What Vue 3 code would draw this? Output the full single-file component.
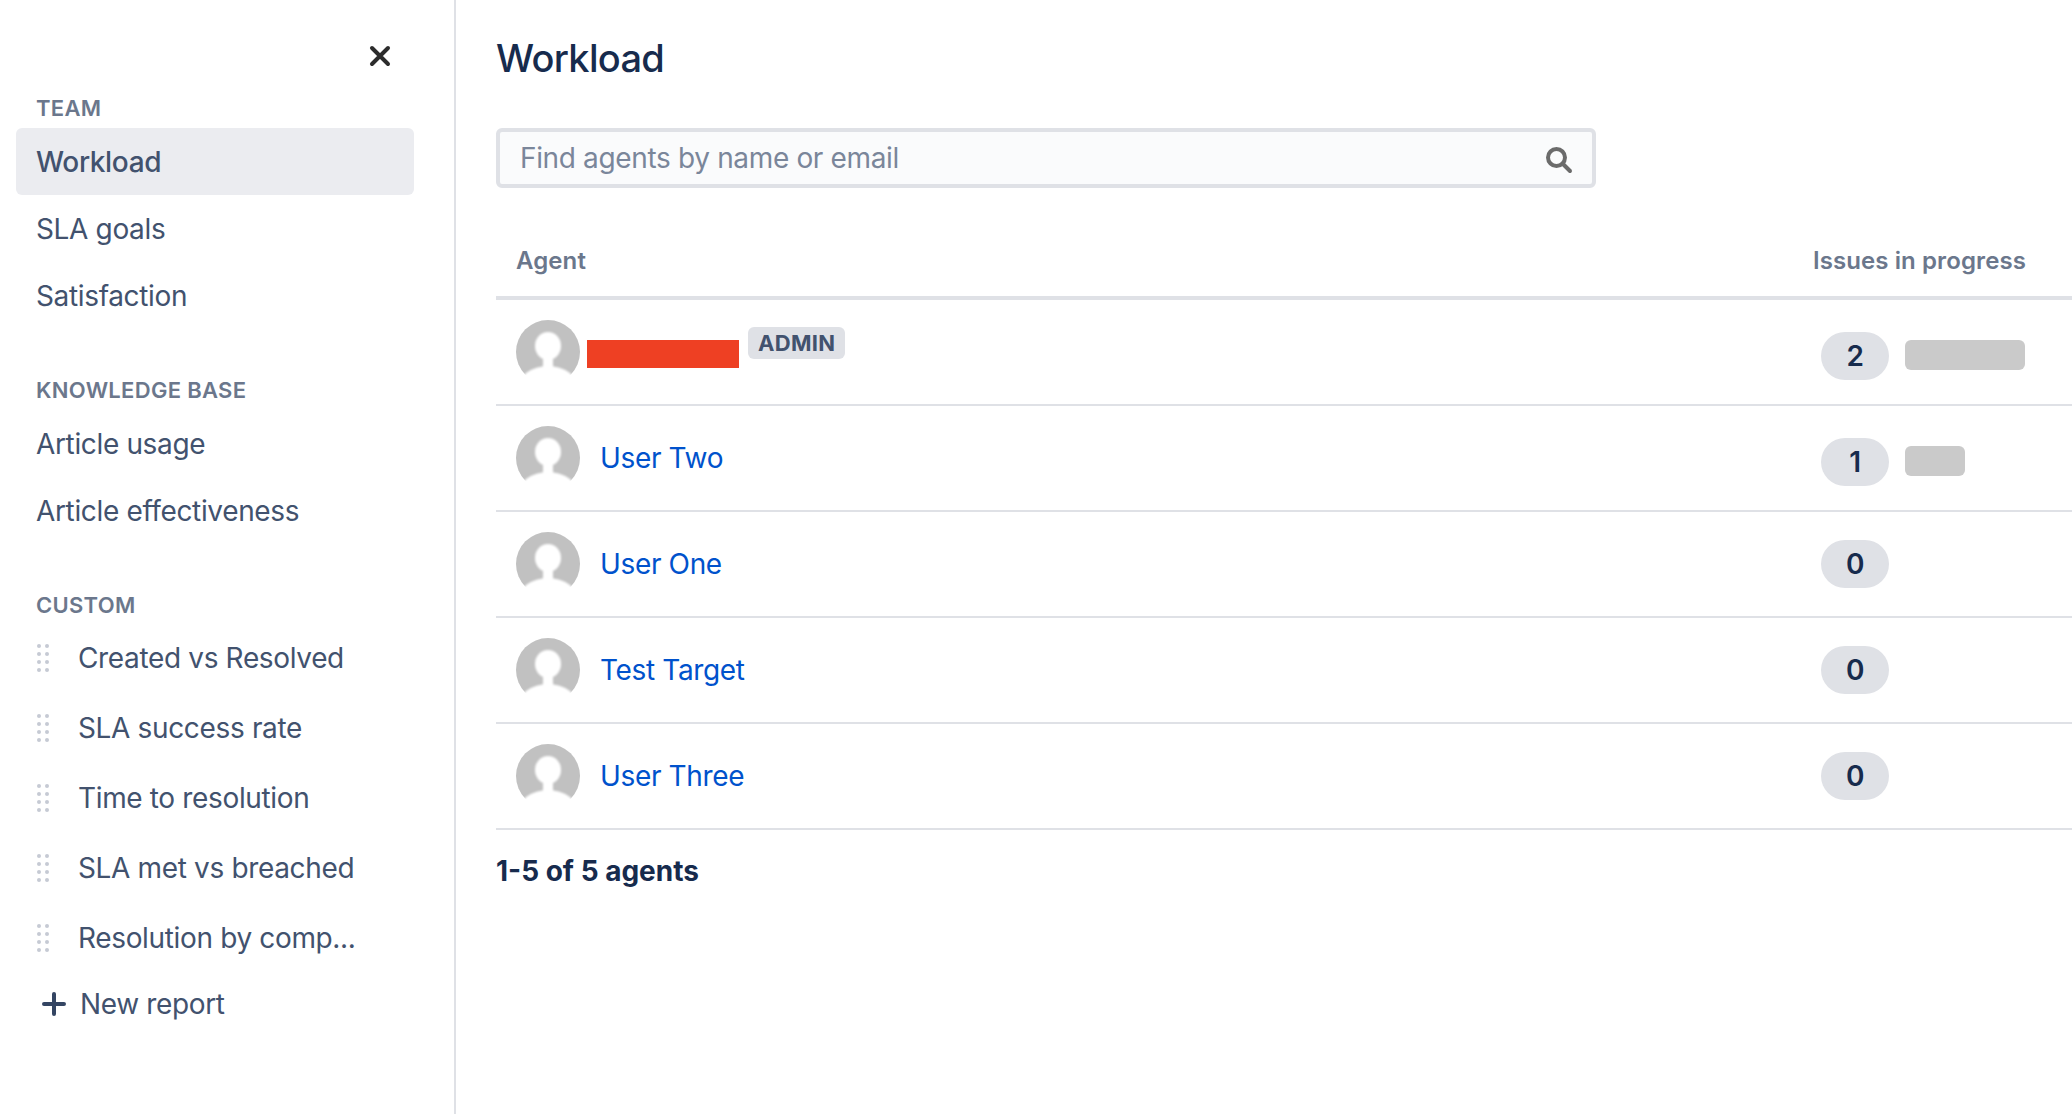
<script setup>
const teamLinks = ['Workload', 'SLA goals', 'Satisfaction'];
const knowledgeLinks = ['Article usage', 'Article effectiveness'];
const customReports = [
  'Created vs Resolved',
  'SLA success rate',
  'Time to resolution',
  'SLA met vs breached',
  'Resolution by comp...',
];
const agents = [
  { name: '', admin: true, issues: 2, bar: 120 },
  { name: 'User Two', issues: 1, bar: 60 },
  { name: 'User One', issues: 0, bar: 0 },
  { name: 'Test Target', issues: 0, bar: 0 },
  { name: 'User Three', issues: 0, bar: 0 },
];
</script>

<template>
  <div class="page">
    <aside class="sidebar">
      <div class="close-row">
        <svg class="close" width="24" height="24" viewBox="0 0 24 24">
          <path d="M4 4l16 16M20 4L4 20" stroke="#2c2c2c" stroke-width="4" stroke-linecap="round" fill="none" />
        </svg>
      </div>

      <h4 class="group-title">TEAM</h4>
      <a
        v-for="(link, index) in teamLinks"
        :key="link"
        class="nav-item"
        :class="{ active: index === 0 }"
      >{{ link }}</a>

      <h4 class="group-title spaced">KNOWLEDGE BASE</h4>
      <a v-for="link in knowledgeLinks" :key="link" class="nav-item">{{ link }}</a>

      <h4 class="group-title spaced">CUSTOM</h4>
      <div class="custom-list">
        <a v-for="report in customReports" :key="report" class="report-item">
          <span class="grip">
            <i v-for="n in 8" :key="n"></i>
          </span>
          {{ report }}
        </a>
      </div>
      <a class="new-report">
        <svg width="24" height="24" viewBox="0 0 24 24">
          <path d="M12 2v20M2 12h20" stroke="#344563" stroke-width="4" stroke-linecap="round" fill="none" />
        </svg>
        New report
      </a>
    </aside>

    <main class="content">
      <h1 class="title">Workload</h1>

      <div class="search">
        <input class="search-input" placeholder="Find agents by name or email" />
        <svg class="search-icon" width="30" height="30" viewBox="0 0 30 30">
          <circle cx="12.5" cy="12.5" r="8.5" stroke="#6b6b6b" stroke-width="4" fill="none" />
          <path d="M19 19l7 7" stroke="#6b6b6b" stroke-width="4" stroke-linecap="round" />
        </svg>
      </div>

      <div class="table-head">
        <span>Agent</span>
        <span>Issues in progress</span>
      </div>

      <div v-for="agent in agents" :key="agent.name" class="row">
        <svg class="avatar" width="64" height="64" viewBox="0 0 64 64">
          <circle cx="32" cy="32" r="32" fill="#c1c1c1" />
          <g class="silhouette" fill="#fff">
            <ellipse cx="32" cy="26" rx="13" ry="14" />
            <rect x="27" y="36" width="10" height="12" />
            <ellipse cx="32" cy="68" rx="30" ry="22" />
            <rect x="-2" y="58" width="68" height="10" />
          </g>
        </svg>

        <template v-if="agent.admin">
          <span class="redacted"></span>
          <span class="badge">ADMIN</span>
        </template>
        <a v-else class="agent-name">{{ agent.name }}</a>

        <div class="issues" :class="{ busy: agent.bar }">
          <span class="count">{{ agent.issues }}</span>
          <span v-if="agent.bar" class="bar" :style="{ width: agent.bar + 'px' }"></span>
        </div>
      </div>

      <p class="total">1-5 of 5 agents</p>
    </main>
  </div>
</template>

<style scoped>
.page {
  display: flex;
  min-height: 1114px;
  font-family: Inter, "Liberation Sans", sans-serif;
  font-size: 28px;
  letter-spacing: -0.35px;
  color: #42526e;
  background: #fff;
}

.sidebar {
  width: 456px;
  flex-shrink: 0;
  box-sizing: border-box;
  border-right: 2px solid #dfe1e6;
  padding: 0 40px 0 16px;
}

.close-row {
  height: 96px;
  display: flex;
  justify-content: flex-end;
  padding: 44px 22px 0 0;
  box-sizing: border-box;
}

.group-title {
  margin: 0 0 8px;
  padding-left: 20px;
  height: 24px;
  line-height: 25px;
  font-size: 22px;
  font-weight: 600;
  letter-spacing: 0.3px;
  color: #6b778c;
}

.group-title.spaced {
  margin-top: 49px;
}

.nav-item {
  display: block;
  height: 67px;
  line-height: 69px;
  padding-left: 20px;
  border-radius: 6px;
}

.nav-item.active {
  background: #ebecf0;
  font-weight: 500;
}

.custom-list {
  margin-top: -2px;
}

.report-item {
  display: flex;
  align-items: center;
  height: 70px;
  padding-left: 21px;
}

.grip {
  display: grid;
  grid-template-columns: 4px 4px;
  column-gap: 4px;
  row-gap: 4px;
  width: 12px;
  margin-right: 29px;
}

.grip i {
  width: 4px;
  height: 4px;
  border-radius: 50%;
  background: #c6cad4;
}

.new-report {
  display: flex;
  align-items: center;
  gap: 14px;
  height: 62px;
  padding-left: 26px;
}

.content {
  flex: 1;
  padding-left: 40px;
  min-width: 0;
}

.title {
  margin: 0;
  padding-top: 34px;
  height: 128px;
  box-sizing: border-box;
  font-size: 38px;
  line-height: 48px;
  font-weight: 500;
  letter-spacing: -0.7px;
  color: #172b4d;
}

.search {
  width: 1100px;
  height: 60px;
  box-sizing: border-box;
  border: 4px solid #dfe1e6;
  border-radius: 6px;
  background: #fafbfc;
  display: flex;
  align-items: center;
}

.search-input {
  flex: 1;
  border: 0;
  outline: none;
  background: transparent;
  padding: 0 0 0 20px;
  font-family: inherit;
  font-size: 28px;
  letter-spacing: inherit;
  color: #172b4d;
}

.search-input::placeholder {
  color: #7a869a;
  opacity: 1;
}

.search-icon {
  margin: 4px 18px 0 0;
}

.table-head {
  display: flex;
  justify-content: space-between;
  align-items: center;
  height: 112px;
  padding: 36px 46px 0 20px;
  box-sizing: border-box;
  border-bottom: 4px solid #dfe1e6;
  font-size: 24px;
  font-weight: 600;
  letter-spacing: 0.1px;
  color: #6b778c;
}

.row {
  display: flex;
  align-items: center;
  height: 106px;
  box-sizing: border-box;
  padding-left: 20px;
  border-bottom: 2px solid #dfe1e6;
}

.avatar {
  flex-shrink: 0;
}

.silhouette {
  filter: blur(1.1px);
}

.redacted {
  width: 152px;
  height: 28px;
  margin: 4px 0 0 7px;
  background: #ee4023;
}

.badge {
  margin: 0 0 18px 9px;
  height: 32px;
  line-height: 32px;
  padding: 0 10px;
  border-radius: 6px;
  background: #dfe1e6;
  font-size: 22px;
  font-weight: 700;
  letter-spacing: 0.3px;
}

.agent-name {
  margin-left: 20px;
  color: #0052cc;
}

.issues {
  margin-left: auto;
  width: 251px;
  flex-shrink: 0;
  display: flex;
  align-items: center;
  gap: 16px;
  box-sizing: border-box;
}

.issues.busy {
  margin-top: 7px;
}

.count {
  width: 68px;
  height: 48px;
  line-height: 48px;
  border-radius: 24px;
  background: #dfe1e6;
  text-align: center;
  font-weight: 600;
  color: #172b4d;
}

.bar {
  height: 30px;
  border-radius: 6px;
  background: #cacaca;
  margin-top: -2px;
}

.total {
  margin: 21px 0 0;
  line-height: 40px;
  font-weight: 700;
  letter-spacing: 0;
  color: #172b4d;
}
</style>

<style>
body {
  background: #fff;
}
</style>
